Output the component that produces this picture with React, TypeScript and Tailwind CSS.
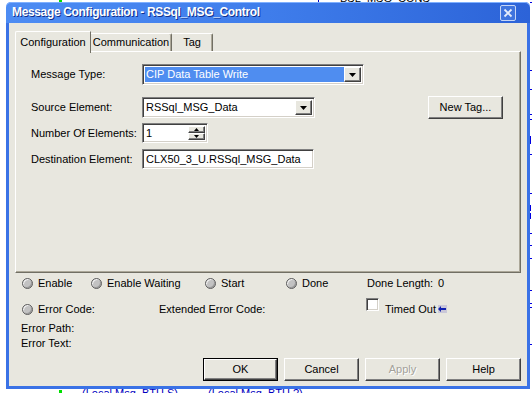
const client = "bg-[#e8e7df]";
const raised =
  "border border-t-white border-l-white border-r-[#404040] border-b-[#404040] shadow-[inset_-1px_-1px_0_#808080]";
const sunken =
  "border border-t-[#808080] border-l-[#808080] border-r-white border-b-white shadow-[inset_1px_1px_0_#404040,inset_-1px_-1px_0_#d4d0c8]";

function DownTri({ w = 7, h = 4 }: { w?: number; h?: number }) {
  return (
    <svg width={w} height={h} viewBox={`0 0 ${w} ${h}`}>
      <polygon points={`0,0 ${w},0 ${w / 2},${h}`} fill="#000" />
    </svg>
  );
}

function UpTri({ w = 5, h = 3 }: { w?: number; h?: number }) {
  return (
    <svg width={w} height={h} viewBox={`0 0 ${w} ${h}`}>
      <polygon points={`0,${h} ${w},${h} ${w / 2},0`} fill="#000" />
    </svg>
  );
}

function Combo({ value, width, selected }: { value: string; width: string; selected?: boolean }) {
  return (
    <div className={`${width} ${sunken} flex h-[21px] bg-white p-[2px]`}>
      <div
        className={`flex flex-1 items-center pl-[1px] ${
          selected ? "bg-[#4f8df0] text-white" : ""
        }`}
      >
        {value}
      </div>
      <div className={`${raised} flex w-[17px] items-center justify-center bg-[#e8e7df]`}>
        <DownTri />
      </div>
    </div>
  );
}

function Button({
  label,
  isDefault,
  disabled,
  className = "",
}: {
  label: string;
  isDefault?: boolean;
  disabled?: boolean;
  className?: string;
}) {
  const inner = (
    <div className={`${raised} flex h-full w-full items-center justify-center ${client}`}>
      <span className={disabled ? "text-[#a3a19a] [text-shadow:1px_1px_0_#fff]" : ""}>{label}</span>
    </div>
  );
  if (isDefault) {
    return <div className={`${className} border border-black`}>{inner}</div>;
  }
  return <div className={className}>{inner}</div>;
}

function Led() {
  return (
    <span className="inline-block h-[11px] w-[11px] shrink-0 rounded-full border border-[#5e5e5e] bg-[#c2c2c2] shadow-[inset_1px_1px_0_#f0f0f0,inset_-1px_-1px_0_#9a9a9a]" />
  );
}

function Backdrop() {
  const ticks = [2, 70, 89, 114, 119, 154, 193, 233, 245, 258, 290, 303, 307, 344];
  return (
    <>
      <div className="absolute left-[59px] top-0 h-[2px] w-[3px] bg-[#00e000]" />
      <div className="absolute left-[318px] top-0 h-[3px] w-[1px] bg-[#0000c0]" />
      <div className="absolute left-[340px] top-[-7px] text-[11px] leading-[11px] text-black">
        BSL_MSG_CONS
      </div>
      {ticks.map((t) => (
        <div key={t} className="absolute left-[530px] h-[1px] w-[2px] bg-[#0000e0]" style={{ top: t }} />
      ))}
      <div className="absolute left-[530px] top-[136px] h-[8px] w-[1px] bg-[#0000e0]" />
      <div className="absolute left-[530px] top-[205px] h-[6px] w-[1px] bg-[#0000e0]" />
      <div className="absolute left-[530px] top-[213px] h-[6px] w-[1px] bg-[#0000e0]" />
      <div className="absolute left-[59px] top-[390px] h-[3px] w-[3px] bg-[#00e000]" />
      <div className="absolute left-[82px] top-[388px] text-[11px] leading-[11px] text-[#0000c0]">
        (Local Msg_BTH.S)
      </div>
      <div className="absolute left-[208px] top-[388px] text-[11px] leading-[11px] text-[#0000c0]">
        (Local Msg_BTH.?)
      </div>
    </>
  );
}

function TitleBar() {
  return (
    <div className="flex h-[21px] items-center rounded-t-[5px] bg-gradient-to-r from-[#4d8cf3] via-[#3f7deb] to-[#2c63d8] pl-[6px] pr-[14px] shadow-[inset_0_1px_0_#7fb0ff]">
      <span className="flex-1 text-[12px] font-bold tracking-[-0.35px] text-white [text-shadow:1px_1px_0_#12308c]">
        Message Configuration - RSSql_MSG_Control
      </span>
      <div className="flex h-[16px] w-[16px] items-center justify-center rounded-[2px] border border-[#c6d6f6] bg-[#3f74de]">
        <svg width="10" height="10" viewBox="0 0 10 10">
          <path d="M1.5 1.5 L8.5 8.5 M8.5 1.5 L1.5 8.5" stroke="#e4ecfc" strokeWidth="1.8" />
        </svg>
      </div>
    </div>
  );
}

function Tabs() {
  return (
    <div className="flex h-[20px] items-end">
      <div
        className={`relative z-10 -mb-[2px] flex h-[22px] w-[76px] items-center justify-center rounded-tl-[2px] border-l border-t border-r border-l-white border-t-white border-r-[#716f64] pb-[1px] ${client}`}
      >
        Configuration
      </div>
      <div className="flex h-[18px] w-[81px] items-center justify-center rounded-tr-[2px] border-t border-r border-t-white border-r-[#716f64] shadow-[inset_-1px_0_0_#aca899]">
        Communication
      </div>
      <div className="flex h-[18px] w-[41px] items-center justify-center rounded-tr-[2px] border-t border-r border-t-white border-r-[#716f64] shadow-[inset_-1px_0_0_#aca899]">
        Tag
      </div>
    </div>
  );
}

function Panel() {
  return (
    <div className="flex h-[222px] flex-col border border-l-white border-t-white border-r-[#716f64] border-b-[#716f64] pl-[15px] pt-[12px] shadow-[inset_-1px_-1px_0_#aca899]">
      <div className="flex h-[21px] items-center">
        <span className="w-[111px]">Message Type:</span>
        <Combo value="CIP Data Table Write" width="w-[222px]" selected />
      </div>
      <div className="mt-[11px] flex h-[23px] items-center">
        <span className="w-[111px]">Source Element:</span>
        <Combo value="RSSql_MSG_Data" width="w-[173px]" />
        <Button label="New Tag..." className="ml-[113px] h-[23px] w-[75px]" />
      </div>
      <div className="mt-[4px] flex h-[20px] items-center">
        <span className="w-[111px]">Number Of Elements:</span>
        <div className={`${sunken} flex h-[20px] w-[66px] bg-white p-[2px]`}>
          <div className="flex flex-1 items-center pl-[1px]">1</div>
          <div className="flex w-[17px] flex-col">
            <div className={`${raised} flex flex-1 items-center justify-center ${client}`}>
              <UpTri />
            </div>
            <div className={`${raised} flex flex-1 items-center justify-center ${client}`}>
              <DownTri w={5} h={3} />
            </div>
          </div>
        </div>
      </div>
      <div className="mt-[6px] flex h-[20px] items-center">
        <span className="w-[111px]">Destination Element:</span>
        <div className={`${sunken} flex h-[20px] w-[172px] items-center bg-white pl-[3px]`}>
          CLX50_3_U.RSSql_MSG_Data
        </div>
      </div>
    </div>
  );
}

export default function App() {
  return (
    <div className="relative h-[393px] w-[532px] overflow-hidden bg-white font-['Liberation_Sans',Arial,sans-serif] text-[11px] leading-[13px] text-black">
      <Backdrop />
      <div className="relative z-10 ml-[6px] mt-[2px] flex h-[387px] w-[524px] flex-col">
        <TitleBar />
        <div className={`flex flex-1 flex-col border-x-[3px] border-b-[3px] border-[#3a72e6] px-[6px] pt-[8px] ${client}`}>
          <Tabs />
          <Panel />

          <div className="mt-[4px] flex h-[13px] items-center pl-[7px]">
            <div className="flex w-[69px] items-center gap-[5px]">
              <Led />
              <span>Enable</span>
            </div>
            <div className="flex w-[114px] items-center gap-[5px]">
              <Led />
              <span>Enable Waiting</span>
            </div>
            <div className="flex w-[81px] items-center gap-[5px]">
              <Led />
              <span>Start</span>
            </div>
            <div className="flex w-[81px] items-center gap-[5px]">
              <Led />
              <span>Done</span>
            </div>
            <span className="w-[71px]">Done Length:</span>
            <span>0</span>
          </div>

          <div className="mt-[12px] flex h-[14px] items-center pl-[7px]">
            <div className="flex w-[137px] items-center gap-[5px]">
              <Led />
              <span>Error Code:</span>
            </div>
            <span className="w-[207px]">Extended Error Code:</span>
            <span className={`${sunken} -mt-[4px] mr-[6px] h-[13px] w-[13px] self-start bg-white`} />
            <span>Timed Out</span>
            <span className="ml-[2px] flex h-[8px] w-[9px] items-center justify-center bg-[#c9c7d8]">
              <svg width="8" height="6" viewBox="0 0 8 6">
                <path d="M0 3 L3 0 L3 2 L8 2 L8 4 L3 4 L3 6 Z" fill="#1020b0" />
              </svg>
            </span>
          </div>

          <div className="mt-[6px] h-[13px] pl-[6px]">Error Path:</div>
          <div className="mt-[2px] h-[13px] pl-[6px]">Error Text:</div>

          <div className="mt-[8px] flex h-[23px] justify-end gap-[6px]">
            <Button label="OK" isDefault className="h-[23px] w-[75px]" />
            <Button label="Cancel" className="h-[23px] w-[75px]" />
            <Button label="Apply" disabled className="h-[23px] w-[75px]" />
            <Button label="Help" className="h-[23px] w-[75px]" />
          </div>
        </div>
      </div>
    </div>
  );
}
